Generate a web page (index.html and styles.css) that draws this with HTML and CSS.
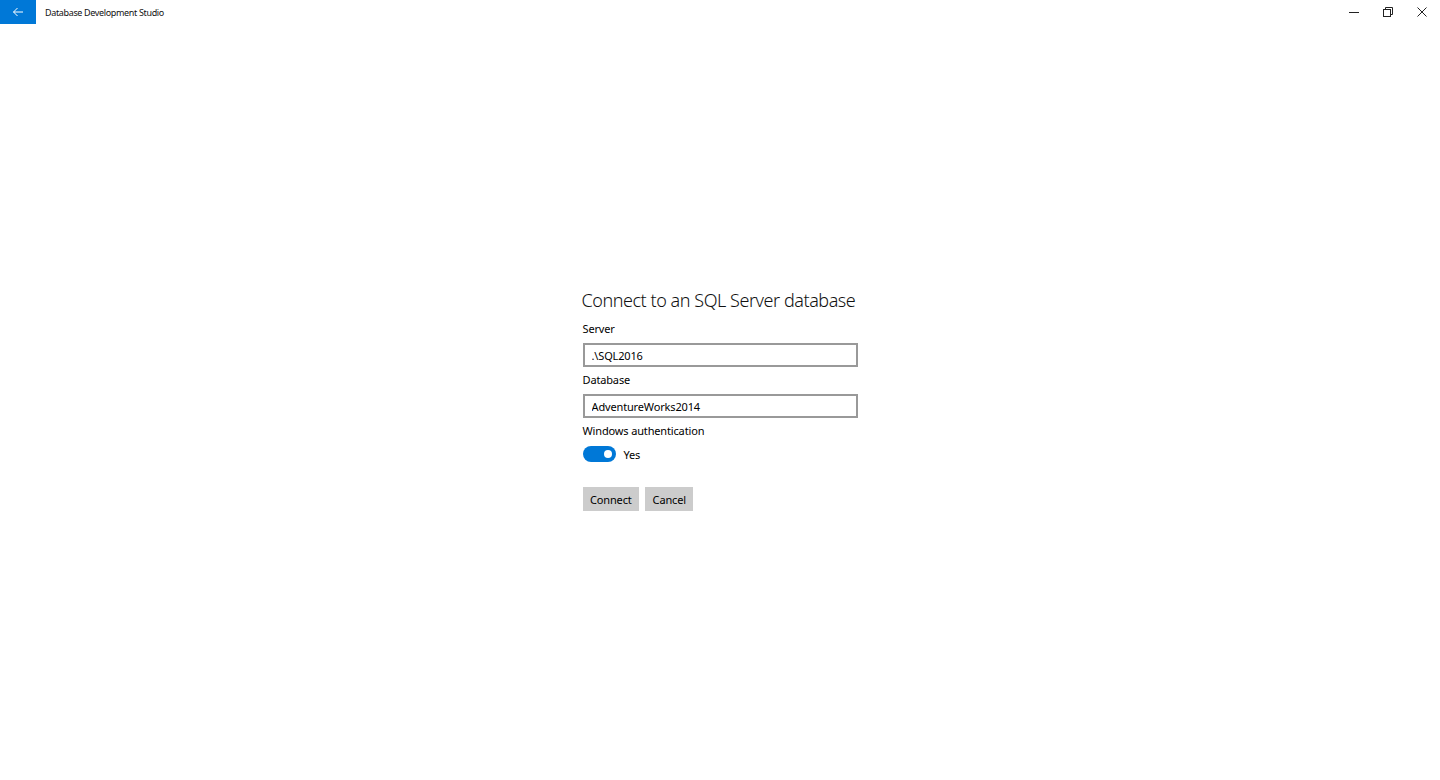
FILE: index.html
```html
<!DOCTYPE html>
<html lang="en">
<head>
    <meta charset="UTF-8">
    <meta name="viewport" content="width=device-width, initial-scale=1.0">
    <title>Database Development Studio</title>
    <link rel="stylesheet" href="styles.css">
</head>
<body>
    <!-- title bar -->
    <div class="titlebar">
        <div class="back-btn">
            <svg width="12" height="10" viewBox="0 0 12 10">
                <path d="M11 5H1.5M5.5 1L1.5 5l4 4" fill="none" stroke="#fff" stroke-width="1"/>
            </svg>
        </div>
        <div class="app-title">Database Development Studio</div>
        <div class="window-controls">
            <div class="win-btn">
                <svg width="10" height="10" viewBox="0 0 10 10">
                    <path d="M0 5.5h10" stroke="#222" stroke-width="1"/>
                </svg>
            </div>
            <div class="win-btn">
                <svg width="10" height="10" viewBox="0 0 10 10">
                    <rect x="0.5" y="2.5" width="7" height="7" fill="#fff" stroke="#222"/>
                    <path d="M2.5 2.5V0.5h7v7h-2" fill="none" stroke="#222"/>
                </svg>
            </div>
            <div class="win-btn">
                <svg width="10" height="10" viewBox="0 0 10 10">
                    <path d="M0.5 0.5l9 9M9.5 0.5l-9 9" stroke="#222" stroke-width="1"/>
                </svg>
            </div>
        </div>
    </div>

    <!-- connection form -->
    <div class="main">
        <form class="connect-form" id="connectForm">
            <h1>Connect to an SQL Server database</h1>

            <label class="field-label">Server</label>
            <input class="textbox" type="text" value=".\SQL2016">

            <label class="field-label">Database</label>
            <input class="textbox" type="text" value="AdventureWorks2014">

            <label class="field-label">Windows authentication</label>
            <div class="toggle-row">
                <span class="toggle on"><span class="knob"></span></span>
                <span class="toggle-text">Yes</span>
            </div>

            <div class="actions">
                <button type="submit">Connect</button>
                <button type="button">Cancel</button>
            </div>
        </form>
    </div>
</body>
</html>
```

FILE: styles.css
```css
* {
    margin: 0;
    padding: 0;
    box-sizing: border-box;
}

body {
    background: #fff;
    color: #000;
    font-family: 'Noto Sans', 'Open Sans', sans-serif;
    font-size: 11px;
    letter-spacing: -0.15px;
    height: 780px;
    overflow: hidden;
}

/* title bar */
.titlebar {
    display: flex;
    align-items: center;
    height: 24px;
}

.back-btn {
    width: 36px;
    height: 24px;
    background: #0078d7;
    display: flex;
    align-items: center;
    justify-content: center;
}

.app-title {
    margin-left: 9px;
    font-size: 9px;
    letter-spacing: -0.35px;
    color: #111;
}

.window-controls {
    display: flex;
    margin-left: auto;
    margin-right: 1px;
}

.win-btn {
    width: 34px;
    height: 24px;
    display: flex;
    align-items: center;
    justify-content: center;
}

/* form */
.main {
    display: flex;
    justify-content: center;
    padding-top: 262px;
}

.connect-form {
    width: 275px;
    display: flex;
    flex-direction: column;
    align-items: flex-start;
}

h1 {
    font-size: 18px;
    font-weight: 300;
    line-height: 28px;
    letter-spacing: -0.45px;
    white-space: nowrap;
    margin-left: -1px;
    margin-bottom: 7px;
    color: #111;
}

.field-label {
    display: block;
    line-height: 16px;
    margin-bottom: 6px;
}

.textbox {
    width: 275px;
    height: 24px;
    border: 2px solid #999;
    padding: 0 7px;
    font-family: inherit;
    font-size: 11px;
    letter-spacing: -0.15px;
    color: #000;
    margin-bottom: 5px;
    outline: none;
}

.toggle-row {
    display: flex;
    align-items: center;
    margin-top: 1px;
}

.toggle {
    width: 33px;
    height: 16px;
    border-radius: 8px;
    background: #0078d7;
    position: relative;
}

.toggle .knob {
    position: absolute;
    right: 4px;
    top: 4px;
    width: 8px;
    height: 8px;
    border-radius: 50%;
    background: #fff;
}

.toggle-text {
    margin-left: 8px;
}

.actions {
    display: flex;
    gap: 6px;
    margin-top: 25px;
}

button {
    background: #ccc;
    border: none;
    height: 24px;
    padding: 0 7.5px;
    font-family: inherit;
    font-size: 11px;
    letter-spacing: -0.15px;
    color: #000;
}
```
